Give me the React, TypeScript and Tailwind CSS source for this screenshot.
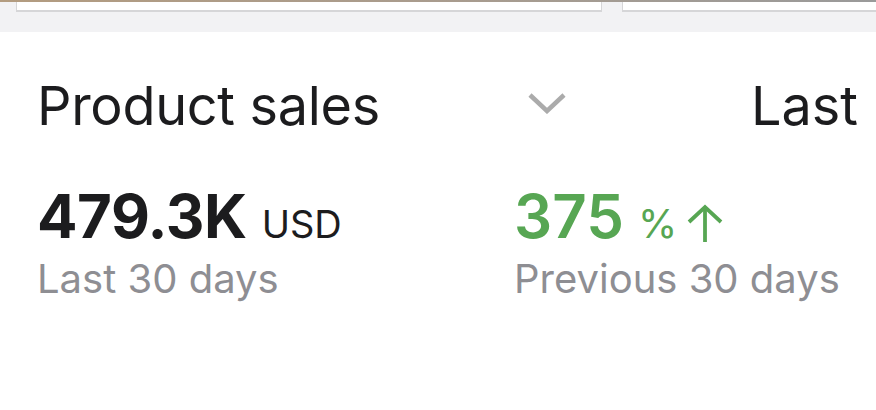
import React from "react";

export default function App() {
  return (
    <div className="w-[876px] h-[410px] overflow-hidden bg-white" style={{ fontFamily: "Inter, 'Noto Sans', sans-serif" }}>
      {/* top strip */}
      <div className="h-[2px] bg-gradient-to-r from-[#b39c80] via-[#a99c8e] to-[#9a9a9a]" />
      <div className="h-[30px] bg-[#f2f2f4] flex items-start">
        <div className="ml-[16px] w-[586px] h-[10px] bg-white border-l border-r border-b-2 border-[#d6d6d8]" />
        <div className="ml-[20px] flex-1 h-[10px] bg-white border-l border-b-2 border-[#d6d6d8]" />
      </div>
      <div className="flex">
        <div className="w-[716px] shrink-0 pl-[37px]">
          <div className="flex items-center w-[530px] justify-between h-[108px] pt-[40px]">
            <span className="text-[54px] leading-none text-[#1c1c1e] tracking-[-0.3px]">Product sales</span>
            <svg width="40" height="22" viewBox="0 0 40 22" className="mt-[-6px]">
              <polyline points="3,3 20,19 37,3" fill="none" stroke="#ababab" strokeWidth="4.5" />
            </svg>
          </div>
          <div className="flex mt-[46px]">
            <div className="w-[477px] shrink-0">
              <div className="flex items-baseline">
                <span className="text-[60px] leading-none font-bold text-[#1c1c1e] tracking-[-0.5px]">479.3K</span>
                <span className="ml-[15px] text-[38px] leading-none text-[#1c1c1e]">USD</span>
              </div>
              <div className="mt-[13px] text-[40px] leading-none text-[#8e8e93]">Last 30 days</div>
            </div>
            <div className="whitespace-nowrap shrink-0">
              <div className="flex items-baseline">
                <span className="text-[60px] leading-none font-semibold text-[#57a653]">375</span>
                <span className="ml-[14px] text-[40px] leading-none text-[#57a653]">%</span>
                <svg width="38" height="38" viewBox="0 0 38 38" className="ml-[9px] self-end mb-[4px]">
                  <polyline points="3,18 19,3 35,18" fill="none" stroke="#57a653" strokeWidth="3.8" />
                  <line x1="19" y1="4" x2="19" y2="38" stroke="#57a653" strokeWidth="3.8" />
                </svg>
              </div>
              <div className="mt-[13px] text-[40px] leading-none text-[#8e8e93]">Previous 30 days</div>
            </div>
          </div>
        </div>
        <div className="shrink-0 ml-[35px] pt-[40px] h-[108px] flex items-center">
          <span className="text-[54px] leading-none text-[#1c1c1e]">Last 30 days</span>
        </div>
      </div>
    </div>
  );
}
